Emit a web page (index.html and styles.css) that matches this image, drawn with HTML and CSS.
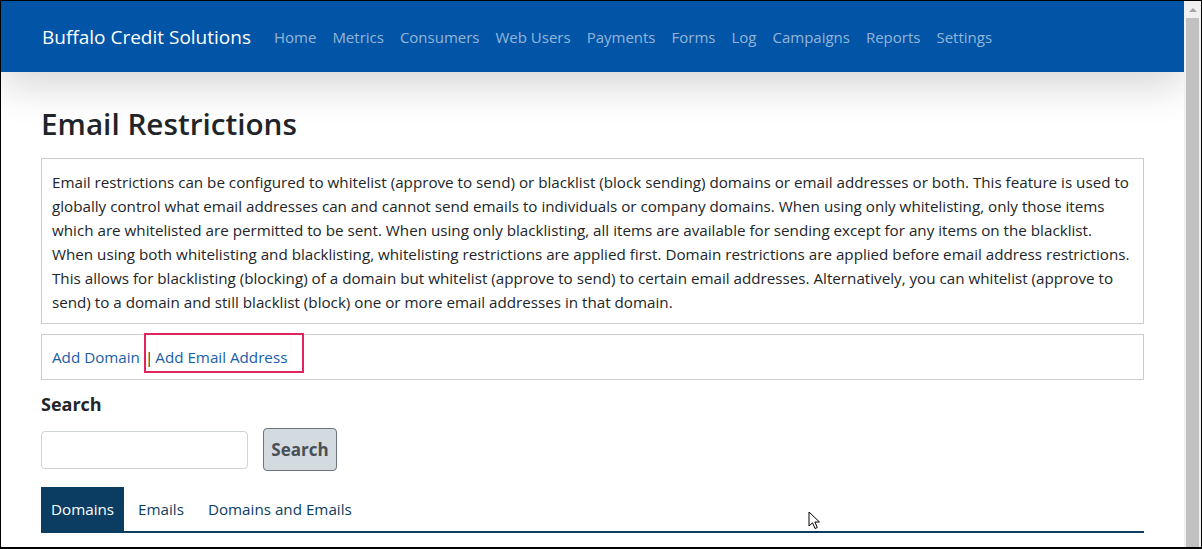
FILE: index.html
```html
<!DOCTYPE html>
<html lang="en">
<head>
<meta charset="utf-8">
<title>Email Restrictions</title>
<link rel="stylesheet" href="styles.css">
</head>
<body>
<div class="frame">
  <div class="viewport">
    <header class="navbar">
      <a class="brand" href="#">Buffalo Credit Solutions</a>
      <nav class="nav-links">
        <a href="#">Home</a>
        <a href="#">Metrics</a>
        <a href="#">Consumers</a>
        <a href="#">Web Users</a>
        <a href="#">Payments</a>
        <a href="#">Forms</a>
        <a href="#">Log</a>
        <a href="#">Campaigns</a>
        <a href="#">Reports</a>
        <a href="#">Settings</a>
      </nav>
    </header>
    <main class="container">
      <h1 class="title">Email Restrictions</h1>
      <div class="panel info">
        <p>Email restrictions can be configured to whitelist (approve to send) or blacklist (block sending) domains or email addresses or both. This feature is used to globally control what email addresses can and cannot send emails to individuals or company domains. When using only whitelisting, only those items which are whitelisted are permitted to be sent. When using only blacklisting, all items are available for sending except for any items on the blacklist. When using both whitelisting and blacklisting, whitelisting restrictions are applied first. Domain restrictions are applied before email address restrictions. This allows for blacklisting (blocking) of a domain but whitelist (approve to send) to certain email addresses. Alternatively, you can whitelist (approve to send) to a domain and still blacklist (block) one or more email addresses in that domain.</p>
      </div>
      <div class="panel actions">
        <a href="#">Add Domain</a><span class="sep">|</span><a href="#" class="add-email">Add Email Address</a>
        <span class="highlight"></span>
      </div>
      <h2 class="search-title">Search</h2>
      <form class="search-row">
        <input type="text" class="search-input">
        <button type="button" class="search-btn">Search</button>
      </form>
      <ul class="tabs">
        <li class="tab active">Domains</li>
        <li class="tab">Emails</li>
        <li class="tab">Domains and Emails</li>
      </ul>
    </main>
    <svg class="cursor" width="14" height="20" viewBox="0 0 14 20"><path d="M1 1 L1 15 L4.5 11.8 L7 17.5 L9.3 16.5 L6.9 11 L11.5 11 Z" fill="#fff" stroke="#000" stroke-width="1" stroke-linejoin="round"/></svg>
  </div>
  <div class="scrollbar">
    <div class="sb-arrow"></div>
    <div class="sb-thumb"></div>
  </div>
</div>
</body>
</html>
```
FILE: styles.css
```css
* { box-sizing: border-box; }
html, body { margin: 0; padding: 0; }
body {
  font-family: "Open Sans", "Noto Sans", "Liberation Sans", sans-serif;
  color: #212529;
  background: #fff;
}
.frame {
  width: 1202px;
  height: 549px;
  border: 1px solid #000;
  border-bottom-width: 2px;
  display: flex;
  overflow: hidden;
}
.viewport {
  flex: 1;
  position: relative;
  overflow: hidden;
  background: #fff;
}
.navbar {
  position: relative;
  z-index: 2;
  height: 71px;
  background: #0254a6;
  display: flex;
  align-items: center;
  padding-left: 41px;
  box-shadow: 0 14px 40px rgba(0, 0, 0, 0.16);
}
.brand {
  color: #fff;
  text-decoration: none;
  font-size: 19px;
  margin-right: 15px;
}
.nav-links { display: flex; }
.nav-links a {
  color: rgba(255, 255, 255, 0.58);
  text-decoration: none;
  font-size: 15px;
  padding: 0 8px;
}
.container {
  padding: 0 40px;
}
.title {
  margin: 33px 0 15px;
  font-size: 29.7px;
  font-weight: 600;
  line-height: 38px;
}
.panel {
  border: 1px solid #ccc;
  padding: 11px 10px 9px;
  font-size: 15.2px;
  line-height: 24px;
}
.panel p { margin: 0; }
.actions {
  position: relative;
  margin-top: 10px;
  padding: 10px 10px 10px;
}
.actions a { color: #1a5ea8; text-decoration: none; }
.sep { margin: 0 2px 0 5px; color: #212529; }
.highlight {
  position: absolute;
  left: 102px;
  top: -2px;
  width: 160px;
  height: 40px;
  border: 2px solid #e0245e;
}
.search-title {
  margin: 12px 0 12px;
  font-size: 18px;
  line-height: 24px;
  font-weight: 700;
}
.search-row {
  display: flex;
  align-items: center;
  gap: 15px;
  margin: 0;
}
.search-input {
  width: 207px;
  height: 38px;
  border: 1px solid #ced4da;
  border-radius: 4px;
  background: #fff;
}
.search-btn {
  width: 74px;
  height: 43px;
  background: #d3dae0;
  border: 1px solid #6c757d;
  border-radius: 4px;
  font-family: inherit;
  font-size: 17px;
  font-weight: 700;
  color: #495057;
  padding: 0;
}
.tabs {
  list-style: none;
  margin: 16px 0 0;
  padding: 0;
  display: flex;
  gap: 4px;
  border-bottom: 2px solid #0b3d63;
}
.tab {
  height: 44px;
  line-height: 44px;
  padding: 0 10px;
  font-size: 15.2px;
  color: #0b3d63;
}
.tab.active {
  background: #0b3d63;
  color: #fff;
}
.cursor {
  position: absolute;
  left: 807px;
  top: 510px;
}
.scrollbar {
  width: 17px;
  background: #f0f0f0;
  position: relative;
}
.sb-arrow {
  width: 0;
  height: 0;
  margin: 7px auto 0;
  border-left: 4px solid transparent;
  border-right: 4px solid transparent;
  border-bottom: 4px solid #a3a3a3;
}
.sb-thumb {
  position: absolute;
  left: 2px;
  right: 2px;
  top: 17px;
  bottom: 0;
  background: #c1c1c1;
}
```
